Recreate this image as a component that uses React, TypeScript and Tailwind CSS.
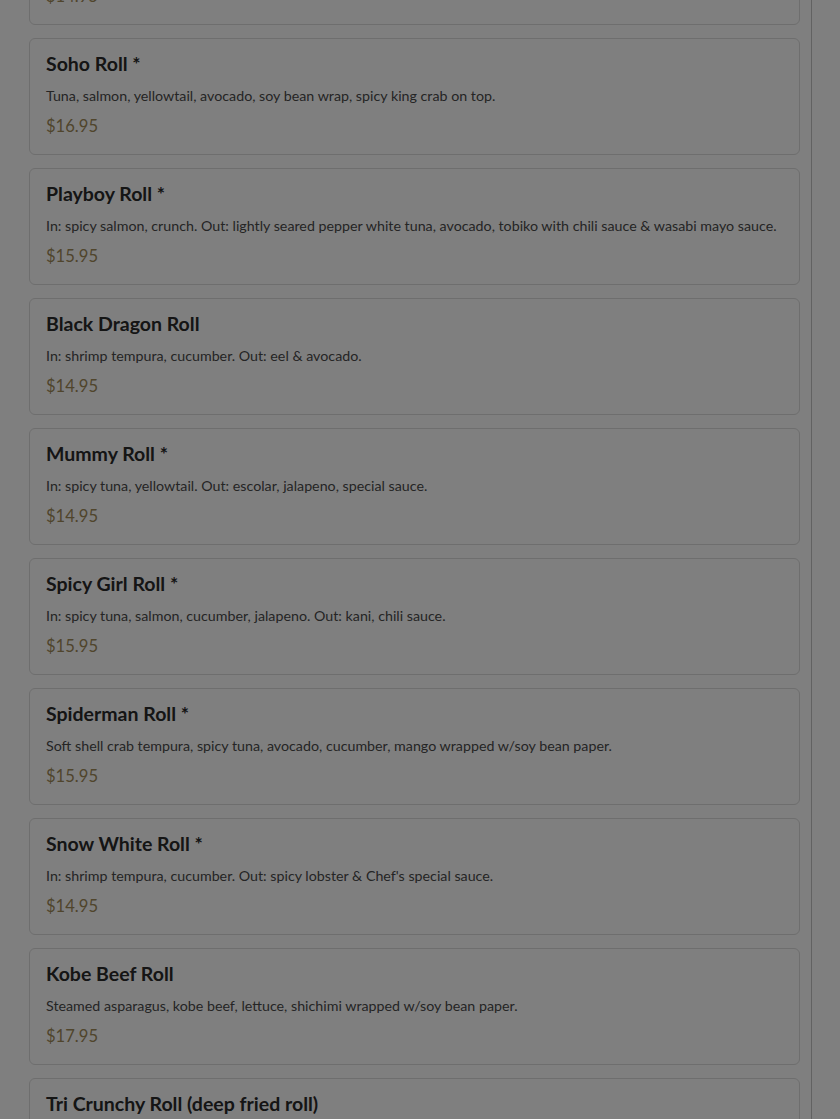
const items = [
  { name: "", desc: "", price: "$14.95" },
  { name: "Soho Roll *", desc: "Tuna, salmon, yellowtail, avocado, soy bean wrap, spicy king crab on top.", price: "$16.95" },
  { name: "Playboy Roll *", desc: "In: spicy salmon, crunch. Out: lightly seared pepper white tuna, avocado, tobiko with chili sauce & wasabi mayo sauce.", price: "$15.95" },
  { name: "Black Dragon Roll", desc: "In: shrimp tempura, cucumber. Out: eel & avocado.", price: "$14.95" },
  { name: "Mummy Roll *", desc: "In: spicy tuna, yellowtail. Out: escolar, jalapeno, special sauce.", price: "$14.95" },
  { name: "Spicy Girl Roll *", desc: "In: spicy tuna, salmon, cucumber, jalapeno. Out: kani, chili sauce.", price: "$15.95" },
  { name: "Spiderman Roll *", desc: "Soft shell crab tempura, spicy tuna, avocado, cucumber, mango wrapped w/soy bean paper.", price: "$15.95" },
  { name: "Snow White Roll *", desc: "In: shrimp tempura, cucumber. Out: spicy lobster & Chef's special sauce.", price: "$14.95" },
  { name: "Kobe Beef Roll", desc: "Steamed asparagus, kobe beef, lettuce, shichimi wrapped w/soy bean paper.", price: "$17.95" },
  { name: "Tri Crunchy Roll (deep fried roll)", desc: "Shrimp tempura, crab stick, avocado, cream cheese, topped with crunch & eel sauce.", price: "$15.95" },
];

function MenuCard({ name, desc, price }: { name: string; desc: string; price: string }) {
  return (
    <div className="mb-[13px] rounded-md border border-[#dcdcdc] bg-white px-4 pt-[15px] pb-4">
      <h3 className="text-[19.5px] font-bold leading-5 text-[#2a2a2a]">{name || "\u00a0"}</h3>
      <p className="mt-3 text-[14.25px] leading-5 text-[#4a4a4a]">{desc || "\u00a0"}</p>
      <p className="mt-2 text-[16.6px] leading-6 text-[#a08a58]">{price}</p>
    </div>
  );
}

export default function App() {
  return (
    <div className="relative h-[1119px] overflow-hidden bg-white" style={{ fontFamily: "Lato, 'Noto Sans', sans-serif" }}>
      <div className="flex">
        <div className="w-[812px] border-r border-[#c4c4c4]">
          <div className="-mt-[92px] pl-[29px] pr-[11px]">
            {items.map((it, i) => (
              <MenuCard key={i} {...it} />
            ))}
          </div>
        </div>
        <div className="flex-1" />
      </div>
      <div className="absolute inset-0 bg-black/50" />
    </div>
  );
}
